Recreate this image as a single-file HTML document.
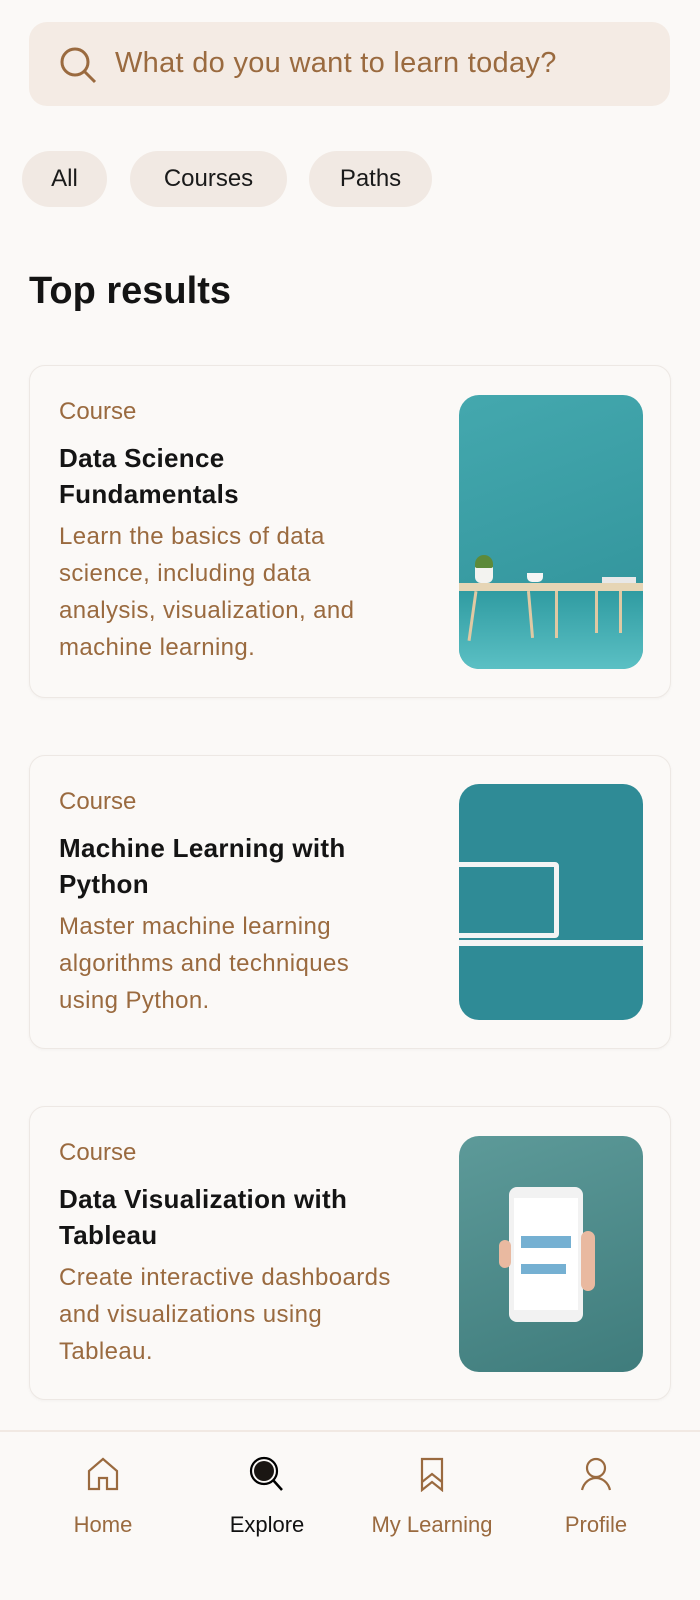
<!DOCTYPE html>
<html><head><style>
*{margin:0;padding:0;box-sizing:border-box}
body{width:700px;height:1600px;background:#fbf9f7;font-family:"Liberation Sans",sans-serif;position:relative;overflow:hidden}
.search{position:absolute;left:29px;top:22px;width:641px;height:84px;background:#f4ebe4;border-radius:18px}
.search span{position:absolute;left:86px;top:25px;font-size:29px;color:#9a6a3f;letter-spacing:0.3px}
.chip{position:absolute;top:151px;height:56px;background:#f1e9e3;border-radius:28px;font-size:24px;color:#1a1a1a;line-height:56px;text-align:center}
h1{position:absolute;left:29px;top:270px;font-size:38px;font-weight:bold;color:#141414}
.card{position:absolute;left:29px;width:642px;background:#fbf9f7;border:1px solid #ede8e4;border-radius:16px;box-shadow:0 1px 3px rgba(0,0,0,.04)}
.card .t{position:absolute;left:29px;top:32px;font-size:24px;color:#9a6a3f}
.card h2{position:absolute;left:29px;top:74px;font-size:26px;line-height:36px;font-weight:bold;color:#141414;white-space:nowrap;letter-spacing:0.3px}
.card p{position:absolute;left:29px;font-size:24px;line-height:37px;color:#9a6a3f;white-space:nowrap;letter-spacing:0.4px}
.img{position:absolute;left:429px;width:184px;border-radius:20px;overflow:hidden}
.nav{position:absolute;left:0;top:1430px;width:700px;height:170px;border-top:2px solid #f1e9e3}
.ni{position:absolute;top:0;width:160px;text-align:center}
.ni svg{position:absolute;top:24px;left:62px}
.ni div{position:absolute;top:80px;width:160px;font-size:22px;color:#9a6a3f}
</style></head><body>
<div class="search">
<svg style="position:absolute;left:30px;top:24px" width="40" height="40" viewBox="0 0 40 40" fill="none" stroke="#9a6a3f" stroke-width="3"><circle cx="16" cy="16" r="13"/><line x1="26" y1="26" x2="36" y2="36"/></svg>
<span>What do you want to learn today?</span></div>
<div class="chip" style="left:22px;width:85px">All</div>
<div class="chip" style="left:130px;width:157px">Courses</div>
<div class="chip" style="left:309px;width:123px">Paths</div>
<h1>Top results</h1>

<div class="card" style="top:365px;height:333px">
<div class="t">Course</div><h2>Data Science<br>Fundamentals</h2>
<p style="top:152px">Learn the basics of data<br>science, including data<br>analysis, visualization, and<br>machine learning.</p>
<div class="img" style="top:29px;height:274px;background:linear-gradient(160deg,#44a8ae,#2f9199)">
<div style="position:absolute;left:0;top:193px;width:184px;height:81px;background:linear-gradient(#2e9aa0,#5bc0c4)"></div>
<div style="position:absolute;left:0;top:188px;width:184px;height:8px;background:#e6d5b5"></div>
<div style="position:absolute;left:16px;top:172px;width:18px;height:16px;background:#f3f3f0;border-radius:0 0 6px 6px"></div>
<div style="position:absolute;left:16px;top:160px;width:18px;height:13px;background:#5d8a3a;border-radius:9px 9px 2px 2px"></div>
<div style="position:absolute;left:68px;top:178px;width:16px;height:9px;background:#f5f5f5;border-radius:0 0 5px 5px"></div>
<div style="position:absolute;left:143px;top:182px;width:34px;height:6px;background:#e8e8e8"></div>
<div style="position:absolute;left:12px;top:196px;width:3px;height:50px;background:#e0c9a3;transform:rotate(8deg)"></div>
<div style="position:absolute;left:70px;top:196px;width:3px;height:47px;background:#e0c9a3;transform:rotate(-5deg)"></div>
<div style="position:absolute;left:96px;top:196px;width:3px;height:47px;background:#e0c9a3"></div>
<div style="position:absolute;left:136px;top:196px;width:3px;height:42px;background:#e0c9a3"></div>
<div style="position:absolute;left:160px;top:196px;width:3px;height:42px;background:#e0c9a3"></div>
</div></div>

<div class="card" style="top:755px;height:294px">
<div class="t">Course</div><h2>Machine Learning with<br>Python</h2>
<p style="top:152px">Master machine learning<br>algorithms and techniques<br>using Python.</p>
<div class="img" style="top:28px;height:236px;background:#2f8b96">
<div style="position:absolute;left:-10px;top:78px;width:110px;height:76px;border:5px solid #f4f4f4;border-radius:4px"></div>
<div style="position:absolute;left:0;top:156px;width:184px;height:6px;background:#f4f4f4"></div>
</div></div>

<div class="card" style="top:1106px;height:294px">
<div class="t">Course</div><h2>Data Visualization with<br>Tableau</h2>
<p style="top:152px">Create interactive dashboards<br>and visualizations using<br>Tableau.</p>
<div class="img" style="top:29px;height:236px;background:linear-gradient(160deg,#5d9a99,#3f7c7c)">
<div style="position:absolute;left:50px;top:51px;width:74px;height:135px;background:#f2f2f2;border-radius:8px"></div>
<div style="position:absolute;left:55px;top:62px;width:64px;height:112px;background:#fff"></div>
<div style="position:absolute;left:62px;top:100px;width:50px;height:12px;background:#3b8fbf;opacity:.7"></div>
<div style="position:absolute;left:62px;top:128px;width:45px;height:10px;background:#3b8fbf;opacity:.7"></div>
<div style="position:absolute;left:40px;top:104px;width:12px;height:28px;background:#e9b9a0;border-radius:6px"></div>
<div style="position:absolute;left:122px;top:95px;width:14px;height:60px;background:#e9b9a0;border-radius:7px"></div>
</div></div>

<div class="nav">
<div class="ni" style="left:23px"><svg width="36" height="36" viewBox="0 0 36 36" fill="none" stroke="#9a6a3f" stroke-width="2.2"><path d="M4 33V15L18 3 32 15V33H22V22H14V33Z"/></svg><div>Home</div></div>
<div class="ni" style="left:187px"><svg width="36" height="36" viewBox="0 0 36 36"><circle cx="15" cy="15" r="10" fill="#1a1613"/><circle cx="15" cy="15" r="13" fill="none" stroke="#000" stroke-width="2.2"/><line x1="24" y1="24" x2="33" y2="34" stroke="#000" stroke-width="2.5"/></svg><div style="color:#111">Explore</div></div>
<div class="ni" style="left:352px"><svg width="36" height="36" viewBox="0 0 36 36" fill="none" stroke="#9a6a3f" stroke-width="2.2"><path d="M8 3H28V34L18 26 8 34Z"/><path d="M8 26L18 18 28 26"/></svg><div>My Learning</div></div>
<div class="ni" style="left:516px"><svg width="36" height="36" viewBox="0 0 36 36" fill="none" stroke="#9a6a3f" stroke-width="2.2"><circle cx="18" cy="12" r="9"/><path d="M4 34C6 26 12 22 18 22S30 26 32 34"/></svg><div>Profile</div></div>
</div>
</body></html>
